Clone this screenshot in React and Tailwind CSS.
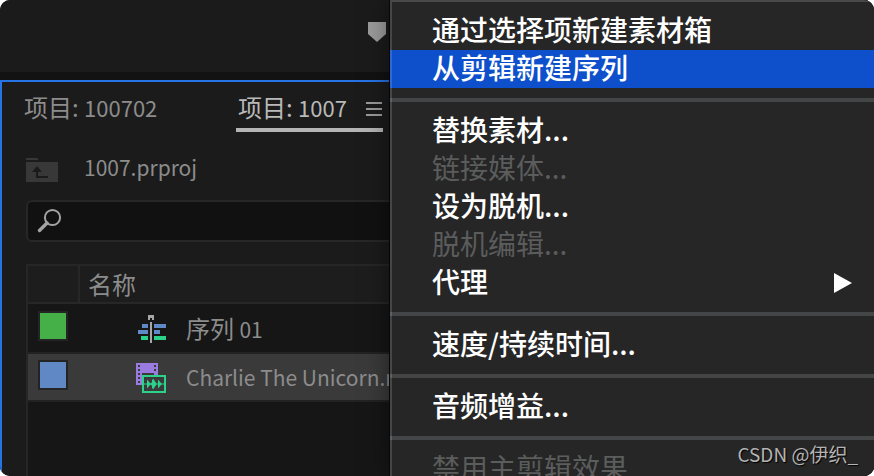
import React from "react";

const MENU = [
  { label: "通过选择项新建素材箱" },
  { label: "从剪辑新建序列", active: true },
  { separator: true },
  { label: "替换素材..." },
  { label: "链接媒体...", disabled: true },
  { label: "设为脱机..." },
  { label: "脱机编辑...", disabled: true },
  { label: "代理", submenu: true },
  { separator: true },
  { label: "速度/持续时间..." },
  { separator: true },
  { label: "音频增益..." },
  { separator: true },
  { label: "禁用主剪辑效果", disabled: true },
];

function SequenceIcon() {
  return (
    <svg viewBox="0 0 30 32" className="h-8 w-[30px] shrink-0" aria-hidden="true" shapeRendering="crispEdges">
      <path fill="#a6a6a6" d="M12 2h6v5h-2V5h-2v2h-2z" />
      <path fill="#a6a6a6" d="M14 9h2v21h-2z" />
      <path fill="#5f88c6" d="M6 11h6v4H6zM18 11h12v4H18zM2 17h10v4H2zM18 17h6v4h-6z" />
      <path fill="#2bd38a" d="M5 23h7v4H5zM18 23h12v4H18z" />
    </svg>
  );
}

function ClipIcon() {
  return (
    <svg viewBox="0 0 30 32" className="h-8 w-[30px] shrink-0" aria-hidden="true">
      <path fill="#9a7be0" d="M0 1h22v22H0z" />
      <path
        fill="#3a3a3a"
        d="M2 3h2v2H2zM2 7h2v2H2zM2 11h2v2H2zM2 15h2v2H2zM2 19h2v2H2zM18 3h2v2h-2zM18 7h2v2h-2zM6 11h12v2H6z"
      />
      <path fill="#3a3a3a" stroke="#2bd38a" strokeWidth="2" d="M7 14h22v16H7z" />
      <path fill="#2bd38a" d="M8 21.500h20v1H8z" />
      <path
        fill="#2bd38a"
        d="M11 17.500l3.500 4v1l-3.500 4zM16 18.500l1-2 3.500 5v1l-3.500 5-1-2zM16 20l-1.500 2 1.500 2zM22 17.500l3.500 4v1l-3.500 4z"
      />
    </svg>
  );
}

function FolderUpIcon() {
  return (
    <svg viewBox="0 0 32 24" className="h-6 w-8" aria-hidden="true">
      <path fill="#383838" d="M0 0h11l1.500 2H0zM0 4h32v20H0z" />
      <path fill="#1b1b1b" d="M11 8l5 6h-4v4h10v2H10v-6H6z" />
    </svg>
  );
}

function Row({ swatch, selected, icon, children }) {
  const cell = (selected ? "h-12" : "h-[50px]") + " border-b-2 border-[#222222] p-0";
  return (
    <tr className={selected ? "bg-[#3a3a3a]" : ""}>
      <td className={cell + " pl-2.5"}>
        <div className={"-mt-1 size-[30px] border-2 border-[#242424] " + swatch} />
      </td>
      <td className={cell}>
        <div className="flex items-center gap-5 pt-0.5 pl-14 whitespace-nowrap">
          {icon}
          <span className="pb-0.5">{children}</span>
        </div>
      </td>
    </tr>
  );
}

function ProjectPanel() {
  return (
    <section className="flex flex-1 flex-col border-t-2 border-l-2 border-[#2673e5] bg-[#1b1b1b] text-[21px] leading-8 text-[#8c8c8c]">
      <div className="flex h-[50px] items-stretch pl-[22px] text-[22px] leading-8" role="tablist">
        <button type="button" role="tab" aria-selected="false" className="h-[50px] w-[212px] text-left whitespace-pre">
          <span className="text-2xl leading-8">项目: </span>100702
        </button>
        <div className="flex w-[147px] items-center justify-between border-b-4 border-[#b4b4b4] pr-px">
          <button type="button" role="tab" aria-selected="true" className="pt-1 pl-0.5 text-[#b9b9b9] whitespace-pre">
            <span className="text-2xl leading-8">项目: </span>1007
          </button>
          <button type="button" aria-label="面板菜单" className="flex w-4 flex-col gap-1 pt-2">
            <span className="h-0.5 bg-[#9a9a9a]" />
            <span className="h-0.5 bg-[#9a9a9a]" />
            <span className="h-0.5 bg-[#9a9a9a]" />
          </button>
        </div>
      </div>

      <div className="flex h-[68px] items-center gap-[26px] pl-6">
        <button type="button" aria-label="上一级" className="pt-2">
          <FolderUpIcon />
        </button>
        <span className="pt-0.5">1007.prproj</span>
      </div>

      <label className="ml-6 flex h-[42px] items-center rounded-md border-2 border-[#272727] bg-[#111111] pl-[9px]">
        <svg viewBox="0 0 26 26" className="size-[26px]" fill="none" aria-hidden="true">
          <circle cx="15.500" cy="9.500" r="7.600" stroke="#a3a3a3" strokeWidth="2" />
          <path d="M10 15L2.500 22.500" stroke="#a3a3a3" strokeWidth="3.400" strokeLinecap="round" />
        </svg>
        <input type="search" aria-label="搜索" className="h-full flex-1 bg-transparent pl-3 outline-none" />
      </label>

      <div className="mt-[22px] ml-6 flex-1 border-t-2 border-l-2 border-[#262626] bg-[#161616]">
        <table className="w-full table-fixed border-separate border-spacing-0">
          <thead>
            <tr className="bg-[#1d1d1d]">
              <th className="h-[38px] w-[52px] border-r-2 border-b-2 border-[#272727] p-0" aria-label="标签" />
              <th className="h-[38px] border-b-2 border-[#272727] p-0 pl-2 text-left text-2xl leading-8 font-normal">名称</th>
            </tr>
          </thead>
          <tbody>
            <Row swatch="bg-[#45b047]" icon={<SequenceIcon />}>
              <span className="text-2xl leading-8">序列 </span>01
            </Row>
            <Row swatch="bg-[#5f88c4]" selected icon={<ClipIcon />}>
              Charlie The Unicorn.mp4
            </Row>
          </tbody>
        </table>
      </div>
    </section>
  );
}

function ContextMenu() {
  return (
    <div
      role="menu"
      className="absolute inset-y-0 right-0 left-[390px] overflow-hidden border-t-2 border-[#474849] bg-[#262626] pt-2.5 text-[28px] leading-[34px] shadow-[0_0_24px_rgba(0,0,0,0.5),-1px_0_0_#0a0a0a]"
    >
      <div className="pointer-events-none absolute inset-y-0 left-0 w-0.5 bg-white/15" />
      {MENU.map((item, i) =>
        item.separator ? (
          <div key={i} role="separator" className="my-2.5 h-1 bg-[#444546]" />
        ) : (
          <button
            key={i}
            type="button"
            role="menuitem"
            disabled={item.disabled}
            className={
              "flex h-[38px] w-full items-start justify-between pr-[22px] pl-[42px] text-left whitespace-nowrap " +
              (item.disabled ? "text-[#5b5c5c]" : "font-medium text-white") +
              (item.active ? " bg-[#0e4fcb]" : "")
            }
          >
            {item.label}
            {item.submenu && (
              <svg viewBox="0 0 18 20" className="h-5 w-[18px] self-center" fill="currentColor" aria-hidden="true">
                <path d="M0 0l18 10L0 20z" />
              </svg>
            )}
          </button>
        )
      )}
    </div>
  );
}

export default function App() {
  return (
    <div className="min-h-screen bg-white">
      <main
        lang="zh-CN"
        className="relative flex h-screen flex-col overflow-hidden rounded-[10px] bg-[#121212] font-['Noto_Sans_CJK_SC',sans-serif]"
      >
        <header className="mb-2 h-[72px] bg-[#1b1b1b] pt-[22px] pl-[368px]">
          <svg viewBox="0 0 18 20" className="h-5 w-[18px]" fill="#9b9b9b" aria-hidden="true">
            <path d="M0 0h18v12l-9 8-9-8z" />
          </svg>
        </header>
        <ProjectPanel />
        <ContextMenu />
        <p className="absolute right-4 bottom-1.5 text-[19px] leading-8 text-[#b4b4b4] [text-shadow:1px_1px_1px_#000]">
          CSDN @伊织_
        </p>
      </main>
    </div>
  );
}
